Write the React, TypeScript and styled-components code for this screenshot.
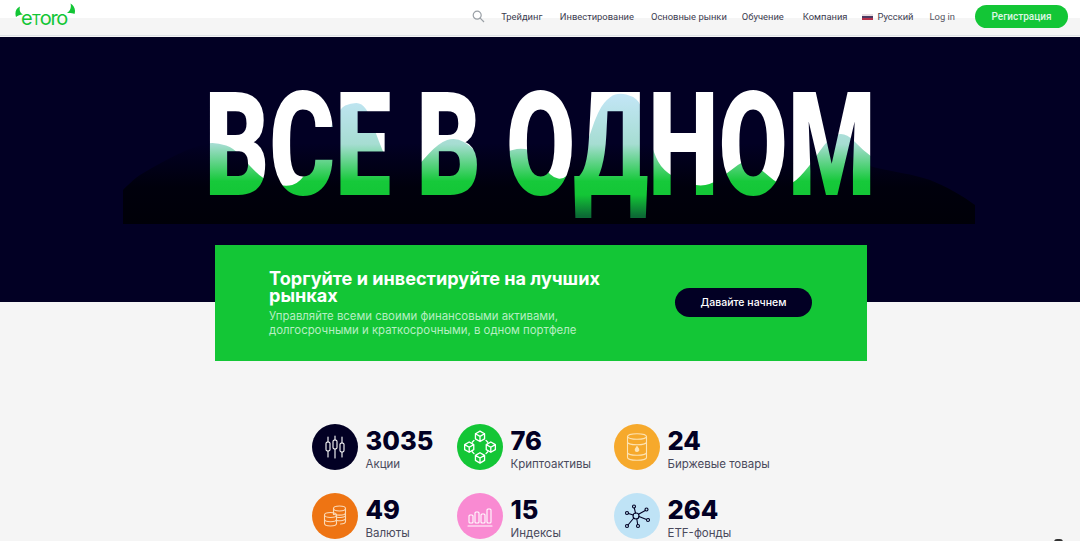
import React from "react";
import styled, { createGlobalStyle } from "styled-components";

const NAVY = "#020024";
const GREEN = "#13c636";

const GlobalStyle = createGlobalStyle`
  html, body {
    margin: 0;
    padding: 0;
    height: 541px;
    overflow: hidden;
    background: #f5f5f5;
    font-family: Inter, "Noto Sans", sans-serif;
    color: ${NAVY};
  }
`;

// wave line inside the headline, points are page pixels
const wave: [number, number][] = [
  [200, 145], [210, 143], [222, 143], [237, 148], [250, 163], [267, 180], [287, 187], [303, 183],
  [317, 158], [330, 135], [342, 108], [353, 103], [364, 103], [372, 115], [380, 140], [395, 175],
  [410, 178], [420, 165], [440, 143], [457, 137], [473, 147], [482, 158], [497, 155], [512, 150],
  [523, 148], [537, 152], [550, 177], [567, 180], [585, 150], [598, 110], [610, 96], [620, 93],
  [632, 96], [640, 103], [645, 123], [653, 153], [662, 170], [683, 183], [707, 187], [730, 170],
  [743, 160], [757, 167], [777, 185], [790, 185], [807, 167], [827, 137], [843, 132], [860, 150],
  [880, 165],
];

const smoothLine = (pts: [number, number][]) => {
  let d = `M${pts[0][0]} ${pts[0][1]}`;
  for (let i = 1; i < pts.length - 1; i++) {
    const mx = (pts[i][0] + pts[i + 1][0]) / 2;
    const my = (pts[i][1] + pts[i + 1][1]) / 2;
    d += `Q${pts[i][0]} ${pts[i][1]} ${mx} ${my}`;
  }
  return d + `L880 220L200 220Z`;
};

const titleArt = `<svg xmlns="http://www.w3.org/2000/svg" viewBox="208 73 665 145" preserveAspectRatio="none"><defs><linearGradient id="g" gradientUnits="userSpaceOnUse" x1="0" y1="92" x2="0" y2="216"><stop offset="0" stop-color="#c4e6f8"/><stop offset="0.42" stop-color="#a6ddd2"/><stop offset="0.72" stop-color="#16c93a"/><stop offset="0.83" stop-color="#13c636"/><stop offset="1" stop-color="#0c6a35"/></linearGradient></defs><rect x="200" y="60" width="700" height="170" fill="#fff"/><path d="${smoothLine(wave)}" fill="url(#g)"/></svg>`;

const Page = styled.div`
  width: 1080px;
  height: 541px;
  overflow: hidden;
  position: relative;
`;

const Header = styled.header`
  height: 36px;
  box-sizing: border-box;
  border-bottom: 1px solid #dfe3e6;
  margin-bottom: 1px;
  background: linear-gradient(#fff 0 18px, #f5f5f5 18px);
  display: flex;
  align-items: center;
  padding: 0 12px 2px 15px;
`;

const Logo = styled.div`
  position: relative;
  width: 60px;
  font-size: 20px;
  line-height: 20px;
  font-weight: 400;
  color: ${GREEN};
  padding-left: 6px;
  padding-top: 4px;
  box-sizing: border-box;
  letter-spacing: -1.3px;
`;

const LogoCap = styled.span`
  font-size: 15px;
`;

const Horns = styled.svg`
  position: absolute;
  left: 0;
  top: -2px;
  width: 60px;
  height: 16px;
`;

const Nav = styled.nav`
  margin-left: auto;
  display: flex;
  align-items: center;
  font-family: Roboto, sans-serif;
  font-size: 9.4px;
  color: #3b3b4f;
`;

const SearchIcon = styled.svg`
  width: 13px;
  height: 13px;
  margin-right: 16px;
`;

const NavLink = styled.a<{ $gap: number }>`
  margin-right: ${(p) => p.$gap}px;
  white-space: nowrap;
`;

const Flag = styled.span`
  width: 11px;
  height: 6px;
  margin-right: 4px;
  background: linear-gradient(#e9dfe2 0 33%, #4b3a63 33% 66%, #b5304a 66%);
`;

const LoginLink = styled.a`
  margin-right: 20px;
  color: #555562;
`;

const SignUp = styled.button`
  width: 93px;
  height: 23px;
  border: 0;
  border-radius: 12px;
  background: ${GREEN};
  color: #dff7e4;
  font: 500 10px Roboto, sans-serif;
`;

const Hero = styled.section`
  position: relative;
  height: 265px;
  background: ${NAVY};
  padding-top: 36px;
  box-sizing: border-box;
  display: flex;
  justify-content: center;
  overflow: hidden;
`;

const Mountain = styled.svg`
  position: absolute;
  left: 123px;
  top: 105px;
  width: 852px;
  height: 82px;
`;

const Title = styled.h1`
  position: relative;
  margin: 0;
  height: 145px;
  font: 900 145px/145px Roboto, sans-serif;
  white-space: nowrap;
  transform: scaleX(0.692);
  transform-origin: center top;
  color: transparent;
  background-image: url("data:image/svg+xml,${encodeURIComponent(titleArt)}");
  background-size: 100% 100%;
  background-repeat: no-repeat;
  -webkit-background-clip: text;
  background-clip: text;
`;

const Banner = styled.section`
  position: relative;
  width: 652px;
  height: 116px;
  margin: -57px 0 0 215px;
  padding: 25px 55px 0 54px;
  box-sizing: border-box;
  background: ${GREEN};
  display: flex;
  justify-content: space-between;
  align-items: flex-start;
`;

const BannerText = styled.div`
  width: 345px;
`;

const BannerTitle = styled.h2`
  margin: 0 0 5px;
  font-size: 18.1px;
  line-height: 17px;
  font-weight: 700;
  color: #fff;
`;

const BannerSub = styled.p`
  margin: 0;
  font-size: 11.4px;
  line-height: 14px;
  color: #b6efc2;
`;

const StartButton = styled.button`
  width: 137px;
  height: 29px;
  margin-top: 18px;
  border: 0;
  border-radius: 15px;
  background: ${NAVY};
  color: #fff;
  font: 500 10.5px Inter, sans-serif;
`;

const Stats = styled.section`
  display: grid;
  grid-template-columns: 145px 157px 155px;
  justify-content: center;
  row-gap: 22px;
  padding-top: 63px;
`;

const Stat = styled.div`
  display: flex;
  align-items: flex-start;
  gap: 8px;
`;

const Badge = styled.div<{ $bg: string }>`
  width: 46px;
  height: 46px;
  flex: none;
  border-radius: 50%;
  background: ${(p) => p.$bg};
  display: flex;
  align-items: center;
  justify-content: center;
`;

const Figure = styled.div`
  font-size: 25.5px;
  line-height: 28px;
  font-weight: 800;
  color: ${NAVY};
  margin-top: 3px;
`;

const Caption = styled.div`
  font-size: 11.5px;
  line-height: 14px;
  color: #4a4a5c;
  margin-top: 2px;
  white-space: nowrap;
`;

const ChatDot = styled.div`
  position: absolute;
  right: 17px;
  bottom: -8px;
  width: 9px;
  height: 10px;
  border-radius: 3px;
  background: #333;
`;

const Ico = styled.svg<{ $w?: number; $h?: number }>`
  width: ${(p) => p.$w ?? 26}px;
  height: ${(p) => p.$h ?? 26}px;
  fill: none;
  stroke-width: 1.1;
  stroke-linecap: round;
  stroke-linejoin: round;
`;

const CandleIcon = () => (
  <Ico viewBox="0 0 26 26" stroke="#fff">
    <path d="M6 3v5M6 17v6M13 2v4M13 15v9M20 3v6M20 18v5" />
    <rect x="4" y="8" width="4" height="9" rx="1.5" />
    <rect x="11" y="6" width="4" height="9" rx="1.5" />
    <rect x="18" y="9" width="4" height="9" rx="1.5" />
  </Ico>
);

const Cube = ({ x, y }: { x: number; y: number }) => (
  <g transform={`translate(${x} ${y})`}>
    <path d="M0-4.2 3.8-2v4.2L0 4.4-3.8 2.2V-2ZM-3.8-2 0 .2 3.8-2M0 .2v4.2" />
  </g>
);

const CryptoIcon = () => (
  <Ico viewBox="0 0 30 30" stroke="#fff" $w={36} $h={36}>
    <Cube x={15} y={6} />
    <Cube x={6} y={15} />
    <Cube x={24} y={15} />
    <Cube x={15} y={24} />
    <path d="M10 9.5 8.5 11M20 9.5l1.5 1.5M10 20.5 8.5 19M20 20.5l1.5-1.5" />
  </Ico>
);

const BarrelIcon = () => (
  <Ico viewBox="0 0 26 30" stroke="#fde3b4" $w={26} $h={30}>
    <ellipse cx="13" cy="4.5" rx="9.5" ry="2.8" />
    <path d="M3.5 4.5v21c0 1.6 4.3 2.8 9.5 2.8s9.5-1.2 9.5-2.8v-21M3.5 10c0 1.6 4.3 2.8 9.5 2.8s9.5-1.2 9.5-2.8M3.5 20.5c0 1.6 4.3 2.8 9.5 2.8s9.5-1.2 9.5-2.8" />
    <path d="M13 14.5c-1.2 1.6-1.8 2.4-1.8 3.2a1.8 1.8 0 0 0 3.6 0c0-.8-.6-1.6-1.8-3.2Z" fill="#fde3b4" />
  </Ico>
);

const CoinsIcon = () => (
  <Ico viewBox="0 0 26 26" stroke="#fbd9b5">
    <ellipse cx="17.5" cy="5.5" rx="6" ry="2.5" />
    <path d="M11.5 5.5v6M23.5 5.5v13c0 1.3-2.2 2.4-5 2.5M11.5 9.7c0 1.3 2.7 2.4 6 2.4s6-1.1 6-2.4M15 14.2c2.4.6 8.5.3 8.5-1.9M15 17.5c3 .6 8.5 0 8.5-2" />
    <ellipse cx="8.5" cy="12" rx="6" ry="2.5" />
    <path d="M2.5 12v8.5c0 1.4 2.7 2.5 6 2.5s6-1.1 6-2.5V12M2.5 16.2c0 1.4 2.7 2.5 6 2.5s6-1.1 6-2.5" />
  </Ico>
);

const BarsIcon = () => (
  <Ico viewBox="0 0 26 26" stroke="#fff">
    <rect x="2" y="12" width="4" height="8" rx="1" />
    <rect x="8" y="9" width="4" height="11" rx="1" />
    <rect x="14" y="11" width="4" height="9" rx="1" />
    <rect x="20" y="6" width="4" height="14" rx="1" />
    <path d="M1 23h24" />
  </Ico>
);

const NetworkIcon = () => (
  <Ico viewBox="0 0 26 26" stroke={NAVY}>
    <circle cx="12" cy="13" r="3" />
    <circle cx="10" cy="3.5" r="1.5" />
    <circle cx="22.5" cy="6.5" r="1.5" />
    <circle cx="24" cy="17" r="1.5" />
    <circle cx="14" cy="23" r="1.5" />
    <circle cx="3" cy="23" r="1.5" />
    <circle cx="3" cy="10" r="1.5" />
    <path d="M11.5 10 10.3 5M14.5 11.3l6.8-3.9M15 13.6l7.5 2.8M12.8 16l.9 5.5M9.8 15 4 22M9.2 12 4.4 10.5" />
  </Ico>
);

const stats = [
  { value: "3035", label: "Акции", bg: NAVY, icon: <CandleIcon /> },
  { value: "76", label: "Криптоактивы", bg: GREEN, icon: <CryptoIcon /> },
  { value: "24", label: "Биржевые товары", bg: "#f6a92c", icon: <BarrelIcon /> },
  { value: "49", label: "Валюты", bg: "#ee7413", icon: <CoinsIcon /> },
  { value: "15", label: "Индексы", bg: "#f98ad2", icon: <BarsIcon /> },
  { value: "264", label: "ETF-фонды", bg: "#bfe3f6", icon: <NetworkIcon /> },
];

const links = [
  { text: "Трейдинг", gap: 17.5 },
  { text: "Инвестирование", gap: 17 },
  { text: "Основные рынки", gap: 15 },
  { text: "Обучение", gap: 19 },
  { text: "Компания", gap: 15 },
];

export default function App() {
  return (
    <Page>
      <GlobalStyle />
      <Header>
        <Logo>
          <Horns viewBox="0 0 60 16">
            <path d="M1 15C-.5 10 1 6.5 5 4.5 4 8 5 11 8 12.5 5 12.5 3 13.5 1 15Z" fill={GREEN} />
            <path d="M59.5 12C61 7.5 59 3.5 55.5 1.5 56.5 5 55.5 9 52 11 55 10.8 57.5 11 59.5 12Z" fill={GREEN} />
          </Horns>
          e<LogoCap>T</LogoCap>oro
        </Logo>
        <Nav>
          <SearchIcon viewBox="0 0 13 13" fill="none" stroke="#9aa0a6" strokeWidth="1.2">
            <circle cx="5.2" cy="5.2" r="4" />
            <path d="M8.2 8.2 12 12" />
          </SearchIcon>
          {links.map((link) => (
            <NavLink key={link.text} $gap={link.gap}>
              {link.text}
            </NavLink>
          ))}
          <Flag />
          <NavLink $gap={16}>Русский</NavLink>
          <LoginLink>Log in</LoginLink>
          <SignUp>Регистрация</SignUp>
        </Nav>
      </Header>
      <Hero>
        <Mountain viewBox="0 0 852 82">
          <defs>
            <linearGradient id="mountainFade" x1="0" y1="0" x2="0" y2="1">
              <stop offset="0" stopColor="#020024" />
              <stop offset="0.55" stopColor="#00000c" />
              <stop offset="1" stopColor="#000008" />
            </linearGradient>
          </defs>
          <path
            d="M0 48C6 42 10 38 17 33 32 24 48 15 64 8 72 5 78 3 85 1H700C718 10 734 18 750 25 770 30 790 32 807 38 824 45 840 54 852 63V82H0Z"
            fill="url(#mountainFade)"
          />
        </Mountain>
        <Title>ВСЕ В ОДНОМ</Title>
      </Hero>
      <Banner>
        <BannerText>
          <BannerTitle>Торгуйте и инвестируйте на лучших рынках</BannerTitle>
          <BannerSub>
            Управляйте всеми своими финансовыми активами, долгосрочными и краткосрочными, в одном
            портфеле
          </BannerSub>
        </BannerText>
        <StartButton>Давайте начнем</StartButton>
      </Banner>
      <Stats>
        {stats.map((stat) => (
          <Stat key={stat.label}>
            <Badge $bg={stat.bg}>{stat.icon}</Badge>
            <div>
              <Figure>{stat.value}</Figure>
              <Caption>{stat.label}</Caption>
            </div>
          </Stat>
        ))}
      </Stats>
      <ChatDot />
    </Page>
  );
}
